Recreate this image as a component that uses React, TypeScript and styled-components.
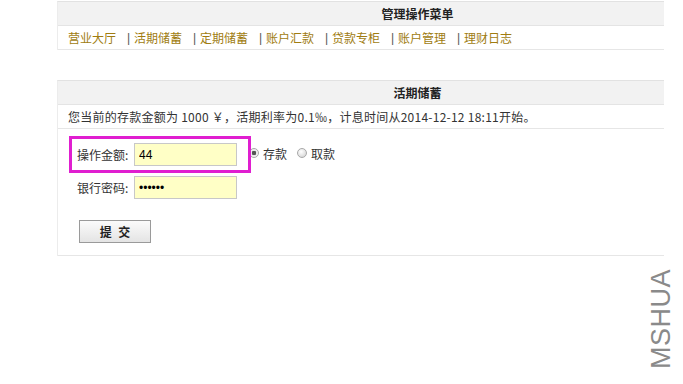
import React from "react";
import styled, { createGlobalStyle } from "styled-components";

const Global = createGlobalStyle`
  html, body { margin: 0; padding: 0; background: #fff; }
  body {
    font-family: "Noto Sans CJK SC", "Liberation Sans", sans-serif;
    font-size: 12px;
    color: #333;
  }
`;

const Page = styled.div`
  position: relative;
  width: 683px;
  height: 384px;
  overflow: hidden;
  padding: 1px 0 0 57px;
  box-sizing: border-box;
`;

const Panel = styled.div<{ $mt?: number }>`
  width: 607px;
  margin-top: ${(p) => p.$mt ?? 0}px;
  border-top: 1px solid #e2e2e2;
  border-left: 1px solid #ececec;
  box-sizing: border-box;
`;

const Head = styled.div`
  height: 23px;
  background: #f2f2f2;
  border-bottom: 1px solid #e4e4e4;
  display: flex;
  align-items: center;
  justify-content: center;
  padding-left: 113px;
  font-weight: bold;
  color: #222;
  line-height: 23px;
`;

const Row = styled.div<{ $h: number }>`
  height: ${(p) => p.$h}px;
  display: flex;
  align-items: center;
  padding-left: 10px;
  border-bottom: 1px solid #e6e6e6;
  white-space: nowrap;
`;

const MenuLink = styled.a`
  color: #a07c10;
  text-decoration: none;
  width: 48px;
  flex: none;
`;

const Sep = styled.span`
  font-family: "Liberation Sans", sans-serif;
  color: #555;
  margin: 0 4px 0 11px;
  width: 3px;
  flex: none;
`;

const Info = styled.span`
  color: #333;
  letter-spacing: 0.25px;
`;

const FormArea = styled.div`
  height: 127px;
  border-bottom: 1px solid #e6e6e6;
  padding: 14px 0 0 19px;
  box-sizing: border-box;
  display: flex;
  flex-direction: column;
`;

const FieldRow = styled.div<{ $mb: number }>`
  display: flex;
  align-items: center;
  height: 23px;
  margin-bottom: ${(p) => p.$mb}px;
`;

const Label = styled.span`
  width: 57px;
  color: #333;
`;

const TextInput = styled.input`
  width: 103px;
  height: 23px;
  box-sizing: border-box;
  background: #ffffc6;
  border: 1px solid #c8c8c8;
  padding: 0 0 0 4px;
  font-family: "Liberation Sans", sans-serif;
  font-size: 12px;
  color: #000;
  outline: none;
`;

const RadioLabel = styled.label<{ $ml: number }>`
  display: flex;
  align-items: center;
  margin-left: ${(p) => p.$ml}px;
  color: #333;
  margin-top: -3px;
`;

const RadioDot = styled.span<{ $on?: boolean }>`
  width: 10px;
  height: 10px;
  border-radius: 50%;
  box-sizing: border-box;
  border: 1px solid #a8a8a8;
  background: ${(p) =>
    p.$on
      ? "radial-gradient(circle, #555 0 2px, #e8e8e8 2.5px, #fafafa 5px)"
      : "radial-gradient(circle at 40% 35%, #fff 0, #dcdcdc 5px)"};
  margin-right: 4px;
`;

const Submit = styled.button`
  margin-top: 21px;
  margin-left: 2px;
  width: 72px;
  height: 23px;
  border: 1px solid #9a9a9a;
  background: linear-gradient(#fbfbfb, #e4e4e4);
  font-family: "Noto Sans CJK SC", sans-serif;
  font-size: 12px;
  font-weight: bold;
  color: #222;
  letter-spacing: 2px;
  padding: 0 0 0 2px;
`;

const Highlight = styled.div`
  position: absolute;
  left: 69px;
  top: 136px;
  width: 182px;
  height: 37px;
  border: 3px solid #e01ed0;
  box-sizing: border-box;
  pointer-events: none;
`;

const Watermark = styled.div`
  position: absolute;
  left: 661px;
  top: 319px;
  transform: translate(-50%, -50%) rotate(-90deg);
  font-family: "Liberation Sans", sans-serif;
  font-size: 27px;
  font-weight: 300;
  color: #8a8a8a;
  letter-spacing: 0.5px;
  white-space: nowrap;
`;

const menu = ["营业大厅", "活期储蓄", "定期储蓄", "账户汇款", "贷款专柜", "账户管理", "理财日志"];

export default function App() {
  return (
    <>
      <Global />
      <Page>
        <Panel>
          <Head>管理操作菜单</Head>
          <Row $h={23}>
            {menu.map((m, i) => (
              <React.Fragment key={m}>
                {i > 0 && <Sep>|</Sep>}
                <MenuLink href="#">{m}</MenuLink>
              </React.Fragment>
            ))}
          </Row>
        </Panel>
        <Panel $mt={30}>
          <Head>活期储蓄</Head>
          <Row $h={23}>
            <Info>您当前的存款金额为 1000 ￥，活期利率为0.1‰，计息时间从2014-12-12 18:11开始。</Info>
          </Row>
          <FormArea>
            <FieldRow $mb={10}>
              <Label>操作金额:</Label>
              <TextInput defaultValue="44" />
              <RadioLabel $ml={12}>
                <RadioDot $on />
                存款
              </RadioLabel>
              <RadioLabel $ml={10}>
                <RadioDot />
                取款
              </RadioLabel>
            </FieldRow>
            <FieldRow $mb={0}>
              <Label>银行密码:</Label>
              <TextInput type="password" defaultValue="123456" />
            </FieldRow>
            <div>
              <Submit>提 交</Submit>
            </div>
          </FormArea>
        </Panel>
        <Highlight />
        <Watermark>MSHUA</Watermark>
      </Page>
    </>
  );
}
